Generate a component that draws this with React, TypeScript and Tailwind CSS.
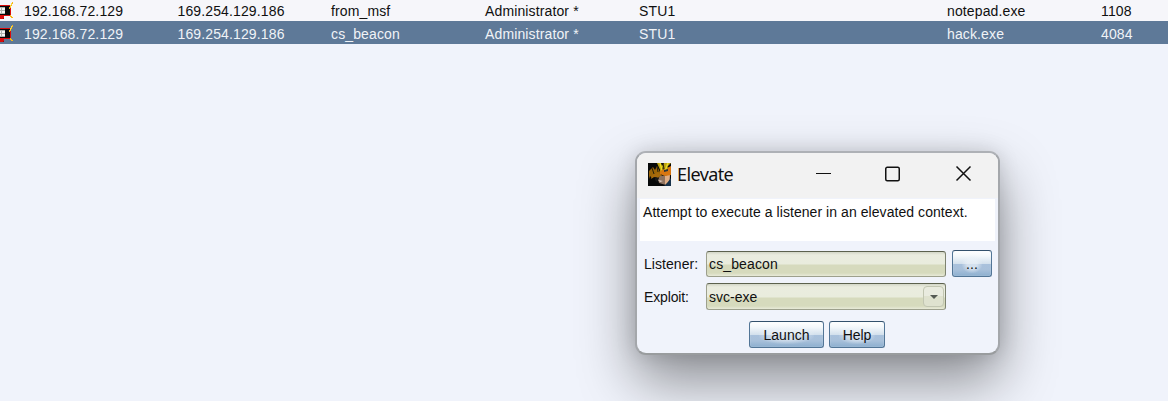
import React from "react";

const rows = [
  { ext: "192.168.72.129", int: "169.254.129.186", listener: "from_msf", user: "Administrator *", host: "STU1", process: "notepad.exe", pid: "1108" },
  { ext: "192.168.72.129", int: "169.254.129.186", listener: "cs_beacon", user: "Administrator *", host: "STU1", process: "hack.exe", pid: "4084" },
];

function HostIcon() {
  return (
    <svg className="block h-5 w-6 shrink-0" viewBox="0 0 24 20" shapeRendering="crispEdges" aria-hidden="true">
      <path d="M0 5h11v11H0z" fill="#d90b0b" />
      <path d="M0 6h10v9H0z" fill="#080808" />
      <path d="M0 7h5v7H0z" fill="#aeb2ae" />
      <path d="M0 8h1v2H0zM2 8h3v2H2zM0 11h1v2H0zM2 11h3v2H2z" fill="#f3f5f2" />
      <path d="M0 16h4v3H0z" fill="#d90b0b" />
      <path d="M3 18h1v1H3z" fill="#8c0d0d" />
      <path d="M12 2h1v2h-1v2h-1v2h-1v1H9V7h1V5h1V3h1zM10 15h1v1h1v1h1v1h-2v-1h-1z" fill="#f5b81b" />
      <path d="M11 3h1v2h-1v2h-1V5h1z" fill="#ffd83a" />
    </svg>
  );
}

function AppIcon() {
  return (
    <svg className="h-[23px] w-[23px]" viewBox="0 0 23 23" aria-hidden="true">
      <path d="M0 0h23v23H0z" fill="#080909" />
      <path d="M1 8l4-4 2 3 2-4 3 6 2 4-4 1-3-1-3 2-2-2-1 3z" fill="#9b6508" />
      <path d="M4 12l6-3 3 3-3 3-4-1-3 2z" fill="#a66a0b" />
      <path d="M12 13l10-1v6l-4 4-7-2-1-4z" fill="#8e7360" />
      <path d="M17 13l5-2-1 8-4 3z" fill="#dfac83" />
      <path d="M12 7l5-1 6-3v9l-6 1-5-2z" fill="#d87611" />
      <path d="M9 0h4l1 3 2-3h7l-4 4 2 1-5 2-1-3-2 5z" fill="#bda414" />
      <path d="M12 0l2 7M20 0l-3 8" stroke="#ebdc21" strokeWidth="1.4" />
      <path d="M15 0l1 6M4 5l2 6M9 3l1 6" stroke="#25200b" />
      <path d="M16 7l4-1v2l-4 1z" fill="#27333b" />
      <path d="M10 17l5 1-3 1z" fill="#e1d2c7" />
      <path d="M7 14l4 1-2 4-2-2z" fill="#171818" />
      <path d="M19 20l4-5v8h-7z" fill="#17324b" />
    </svg>
  );
}

function Button({ className, children }: { className: string; children: React.ReactNode }) {
  return (
    <button className={`${className} flex items-center justify-center rounded-[3px] border border-[#527596] border-t-[#34516c] bg-[linear-gradient(to_bottom,#fff_0%,#f4f8fb_20%,#d4e1ed_50%,#a9c1dc_52%,#a8c0da_75%,#8dafcf_100%)] shadow-[inset_0_0_1px_#e3edf6]`}>
      <span className="bg-[radial-gradient(ellipse,rgba(236,242,248,.65)_35%,transparent_75%)] px-1 leading-[18px]">{children}</span>
    </button>
  );
}

export default function App() {
  return (
    <main className="relative h-[401px] w-full overflow-hidden bg-[#f0f3fb] font-['Liberation_Sans',sans-serif] text-[14px] tracking-[0.13px] text-[#101010]">
      <section>
        {rows.map((row, index) => (
          <div key={row.listener} className={`flex w-full ${index === 1 ? "h-[23px] bg-[#5e7998] pt-[2px] text-[#f0f3f7]" : "h-[21px] bg-[#f6f6fa]"}`}>
            <HostIcon />
            <div className="grid h-[21px] grid-cols-[153.5px_153.5px_154px_154px_308px_154px_67px] pt-px leading-[21px]">
              <span>{row.ext}</span><span>{row.int}</span><span>{row.listener}</span>
              <span>{row.user}</span><span>{row.host}</span><span>{row.process}</span><span>{row.pid}</span>
            </div>
          </div>
        ))}
      </section>

      <section className="absolute left-[635px] top-[151px] h-[204px] w-[365px] overflow-hidden rounded-[11px] border-2 border-[#a4a7ab] border-t-[#aeb1b6] border-b-[#999c9e] bg-[#f0f3fb] shadow-[0_26px_56px_rgba(0,0,0,.42),0_0_20px_rgba(0,0,0,.13)]">
        <header className="flex h-[45px] items-center bg-[#f2f2f2] pb-[3px] pl-[11px]">
          <AppIcon />
          <h1 className="ml-[6px] w-[137px] pb-px font-['Noto_Sans',sans-serif] text-[18px] leading-[24px] tracking-[-0.6px]">Elevate</h1>
          <svg className="h-[18px] w-[160px]" viewBox="0 0 160 18" fill="none" stroke="#111" strokeWidth="1.5" aria-label="Window controls">
            <path d="M2 8.5h15" strokeWidth="1" shapeRendering="crispEdges" />
            <rect x="71.75" y="2.25" width="13.5" height="13.5" rx="1.5" />
            <path d="M142.5 1.5l14 14M156.5 1.5l-14 14" />
          </svg>
        </header>
        <div className="mx-[3px] mt-px h-[42px] bg-white pl-[3px] pt-[3px] leading-5 tracking-[0.06px]">Attempt to execute a listener in an elevated context.</div>
        <div className="mt-[9px] flex h-[27px] items-center pl-[7px]">
          <label className="w-[62px] pt-px tracking-[0.06px]">Listener:</label>
          <div className="flex h-[26px] w-[240px] items-center rounded-[3px] border border-[#9da08d] border-t-[#5c614e] border-r-[#7e8370] bg-[linear-gradient(to_bottom,#d3d6c7_0px,#eaecdf_3px,#e9ecdd_12px,#d6dabd_13px,#d6dabd_21px,#e8ead9_24px)] pl-[2px] pt-[2px]">cs_beacon</div>
          <Button className="ml-[6px] h-[27px] w-10">...</Button>
        </div>
        <div className="mt-[6px] flex h-[27px] items-center pl-[7px]">
          <label className="w-[62px] pt-[2px] tracking-[-0.15px]">Exploit:</label>
          <div className="flex h-[27px] w-[240px] items-center justify-between rounded-[3px] border border-[#9da08d] border-t-[#5c614e] border-r-[#7e8370] bg-[linear-gradient(to_bottom,#d3d6c7_0px,#eaecdf_3px,#e9ecdd_13px,#d6dabd_14px,#d6dabd_22px,#e8ead9_25px)] pl-[2px] pr-px">
            <span className="pt-[2px] tracking-normal">svc-exe</span>
            <span className="flex h-[21px] w-[21px] items-center justify-center rounded-sm border border-[#c2c6b2] bg-[linear-gradient(#e9ebdf_48%,#dfe2cf_50%)]">
              <svg className="h-[4px] w-[8px]" viewBox="0 0 8 4" aria-hidden="true"><path d="M0 0h8L4 4z" fill="#555a54" /></svg>
            </span>
          </div>
        </div>
        <div className="mt-[11px] flex gap-[5px] pl-[112px]">
          <Button className="h-[27px] w-[75px] tracking-[0.05px]">Launch</Button>
          <Button className="h-[27px] w-[56px] tracking-[-0.1px]">Help</Button>
        </div>
      </section>
    </main>
  );
}
